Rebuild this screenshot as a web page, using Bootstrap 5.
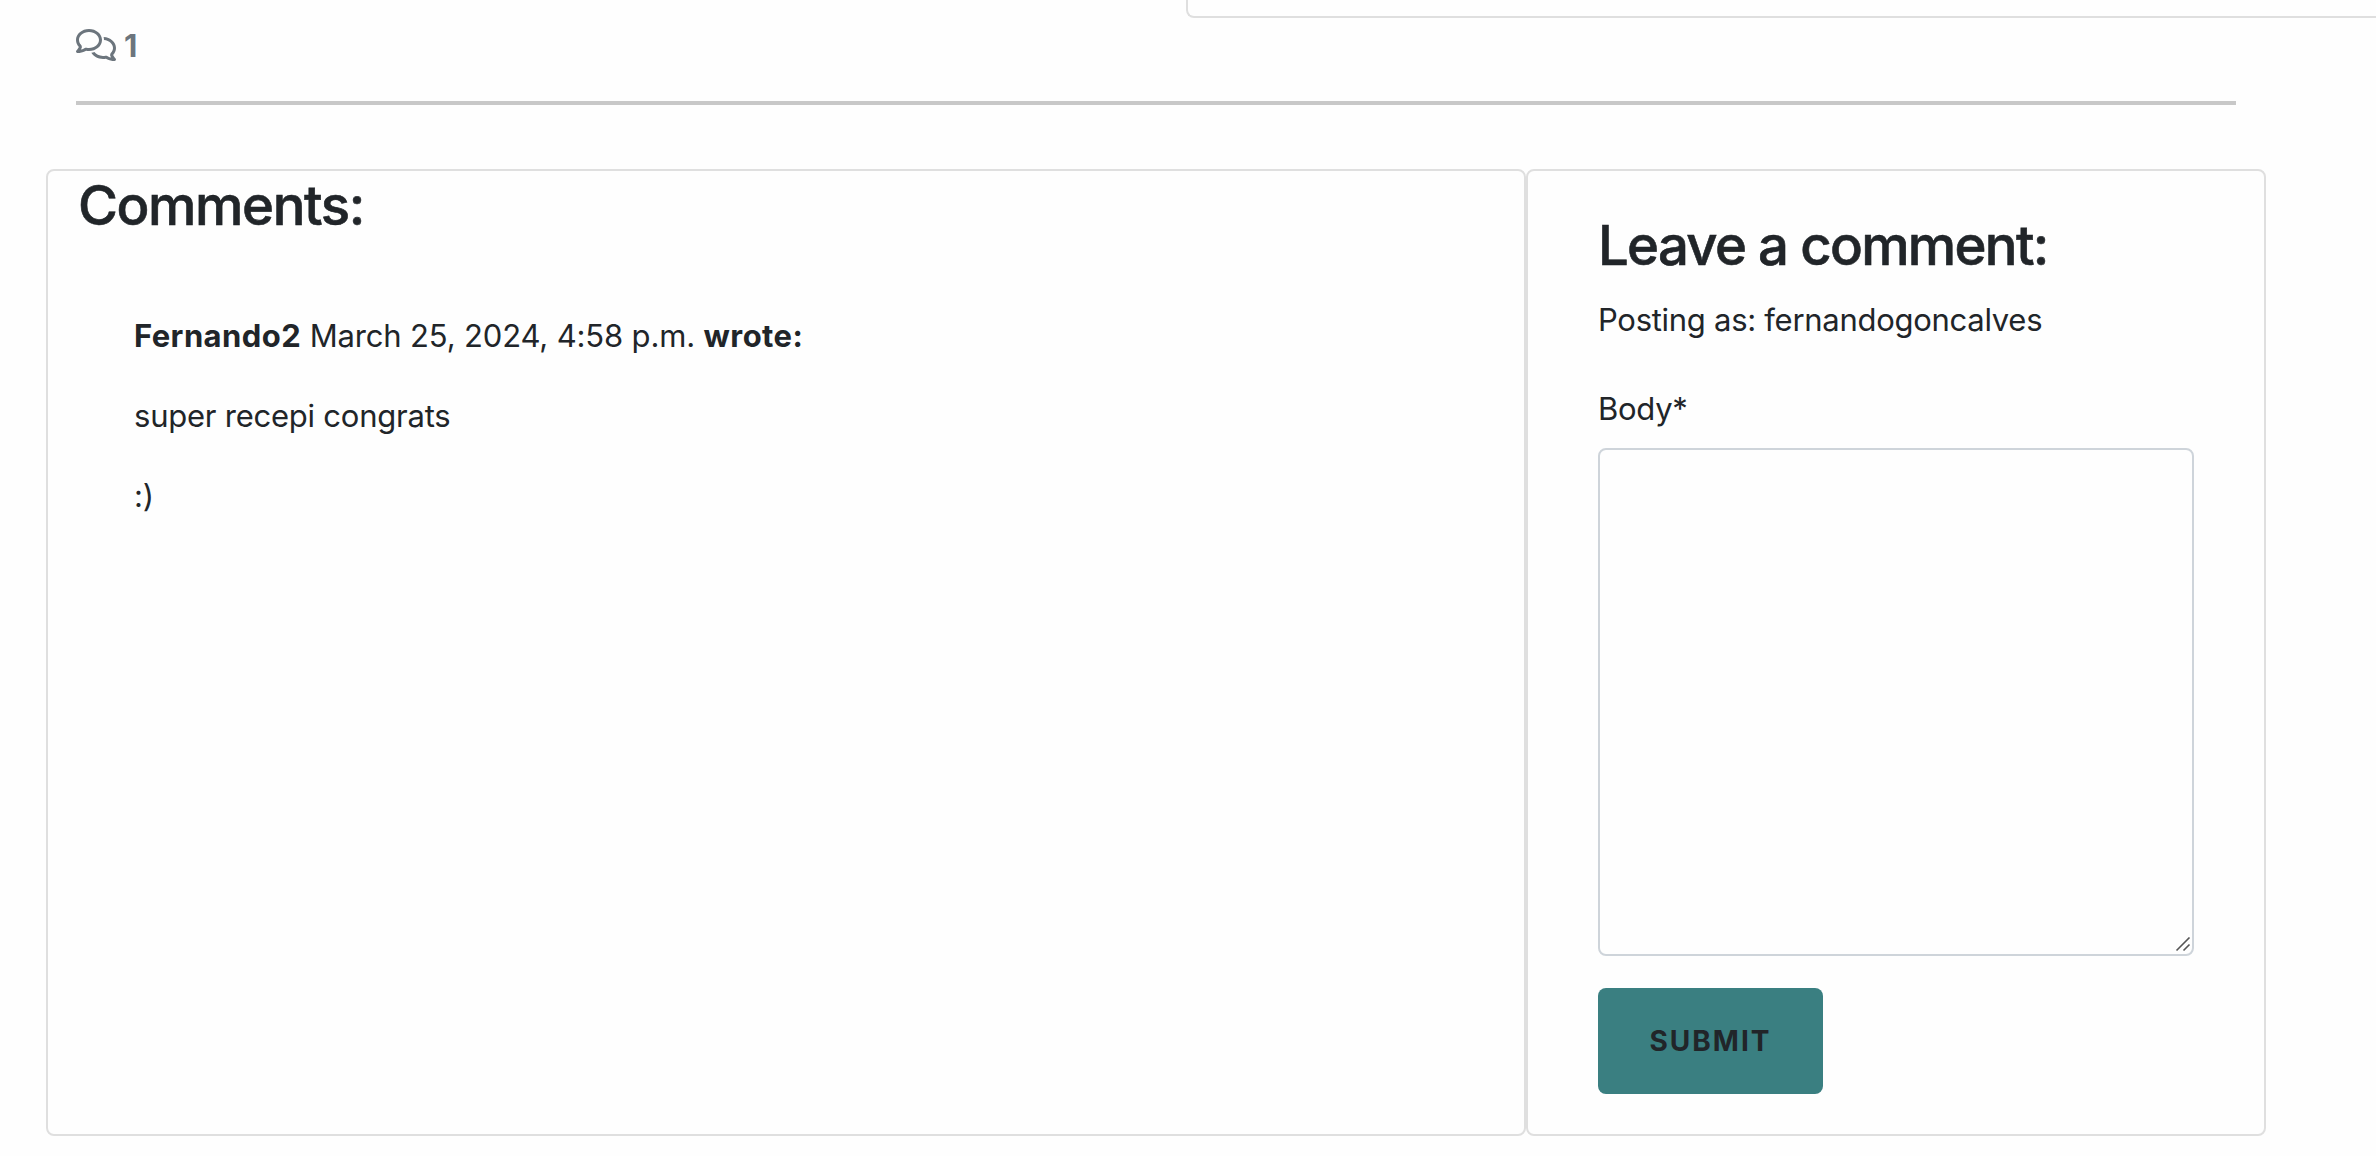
<!DOCTYPE html>
<html lang="en">
<head>
  <meta charset="UTF-8" />
  <meta name="viewport" content="width=device-width, initial-scale=1">
  <title>Recipe comments</title>
  <link href="https://cdn.jsdelivr.net/npm/bootstrap@5.3.0/dist/css/bootstrap.min.css" rel="stylesheet">
  <style>
    html {
      font-size: 32px;
    }
    body {
      font-family: Inter, "Liberation Sans", sans-serif;
      font-size: 31px;
      line-height: 48px;
      color: #212529;
      background: #fefefe;
      overflow: hidden;
    }
    h3 {
      font-size: 54.5px;
      font-weight: 500;
      line-height: 69px;
      letter-spacing: -1.4px;
      -webkit-text-stroke: 0.6px #212529;
    }
    .card {
      border: 2px solid #dfdfdf;
      border-radius: 8px;
      background: #fefefe;
    }
    .recipe-end {
      height: 18px;
      margin-left: 1186px;
      border-top: 0;
      border-right: 0;
      border-radius: 0 0 0 8px;
    }
    .comment-page {
      width: 2220px;
      margin-left: 46px;
    }
    .comment-count {
      height: 53px;
      padding: 4px 30px 0;
      gap: 8px;
      color: #6c757d;
    }
    .comment-count svg {
      width: 40px;
      height: 32px;
      margin-top: 7px;
    }
    .comment-page hr {
      height: 4px;
      margin: 30px 30px 64px;
      border: 0;
      background: #c8c8c8;
      opacity: 1;
    }
    .comment-row {
      height: 967px;
    }
    .comment-list {
      padding: 0 30px;
    }
    .comment-item {
      padding: 72px 56px 0;
    }
    .comment-item p {
      margin-bottom: 32px;
      letter-spacing: -0.23px;
    }
    .comment-item .comment-meta {
      letter-spacing: -0.15px;
    }
    .comment-meta strong {
      letter-spacing: 0.42px;
    }
    .comment-form {
      padding: 40px 70px 0;
      letter-spacing: -0.28px;
    }
    .comment-form h3 {
      letter-spacing: -1.7px;
    }
    .posting-as {
      margin-bottom: 41px;
    }
    .comment-form label {
      margin-bottom: 15px;
    }
    .comment-form textarea {
      height: 508px;
      border: 2px solid #ced4da;
      border-radius: 8px;
      background: #fefefe;
      resize: none;
    }
    .resize-grip {
      right: 3px;
      bottom: 3px;
      width: 16px;
      height: 16px;
    }
    .btn-submit {
      width: 225px;
      height: 106px;
      margin-top: 32px;
      border: 0;
      border-radius: 8px;
      background: #3a7f81;
      color: #212529;
      font-size: 28px;
      font-weight: 700;
      letter-spacing: 2px;
    }
  </style>
</head>
<body>

<div class="card recipe-end"></div>

<div class="comment-page">
  <div class="comment-count d-flex align-items-start">
    <svg viewBox="0 0 640 512" fill="currentColor"><path d="M88.2 309.1c9.8-18.3 6.8-40.8-7.5-55.8C59.4 230.9 48 204 48 176c0-63.5 63.8-128 160-128s160 64.5 160 128s-63.8 128-160 128c-13.1 0-25.8-1.3-37.8-3.6c-10.4-2-21.2-.6-30.7 4.2c-4.1 2.1-8.3 4.1-12.6 6c-16 7.2-32.9 13.5-49.9 18c2.8-4.6 5.4-9.1 7.9-13.6c1.1-1.9 2.2-3.9 3.2-5.9zM0 176c0 41.8 17.2 80.1 45.9 110.3c-.9 1.7-1.9 3.5-2.8 5.1c-10.3 18.4-22.3 36.5-36.6 52.1c-6.6 7-8.3 17.2-4.6 25.9C5.8 378.3 14.4 384 24 384c43 0 86.5-13.3 122.7-29.7c4.8-2.2 9.6-4.5 14.2-6.8c15.1 3 30.9 4.5 47.1 4.5c114.9 0 208-78.8 208-176S322.9 0 208 0S0 78.8 0 176zM432 480c16.2 0 31.9-1.6 47.1-4.5c4.6 2.3 9.4 4.6 14.2 6.8C529.5 498.7 573 512 616 512c9.6 0 18.2-5.7 22-14.5c3.8-8.8 2-19-4.6-25.9c-14.2-15.6-26.2-33.7-36.6-52.1c-.9-1.7-1.9-3.4-2.8-5.1C622.8 384.1 640 345.8 640 304c0-94.4-87.9-171.5-198.2-175.8c4.1 15.2 6.2 31.2 6.2 47.8l0 .6c87.2 6.7 144 67.5 144 127.4c0 28-11.4 54.9-32.7 77.2c-14.3 15-17.3 37.6-7.5 55.8c1.1 2 2.2 4 3.2 5.9c2.5 4.5 5.2 9 7.9 13.6c-17-4.5-33.9-10.7-49.9-18c-4.3-1.9-8.5-3.9-12.6-6c-9.5-4.8-20.3-6.2-30.7-4.2c-12.1 2.4-24.7 3.6-37.8 3.6c-61.7 0-110-26.5-136.8-62.3c-16 5.4-32.8 9.4-50 11.8C279 439.8 350 480 432 480z"/></svg>
    <strong>1</strong>
  </div>
  <hr>

  <div class="row g-0 comment-row">
    <div class="col-8 card comment-list">
      <h3 class="mb-0">Comments:</h3>
      <div class="comment-item">
        <p class="comment-meta"><strong>Fernando2</strong> March 25, 2024, 4:58 p.m. <strong>wrote:</strong></p>
        <p>super recepi congrats</p>
        <p>:)</p>
      </div>
    </div>
    <div class="col-4 card comment-form">
      <h3 class="mb-2">Leave a comment:</h3>
      <div class="posting-as">Posting as: fernandogoncalves</div>
      <form>
        <label class="d-block" for="body">Body*</label>
        <div class="position-relative">
          <textarea id="body" class="form-control"></textarea>
          <svg class="resize-grip position-absolute" viewBox="0 0 16 16" fill="none" stroke="#555" stroke-width="1.6"><path d="M1.5 13.5L14.5 0.5M8.5 13.5L14.5 7.5"/></svg>
        </div>
        <button type="button" class="btn btn-submit">SUBMIT</button>
      </form>
    </div>
  </div>
</div>

<script src="https://cdn.jsdelivr.net/npm/bootstrap@5.3.0/dist/js/bootstrap.bundle.min.js"></script>
</body>
</html>
